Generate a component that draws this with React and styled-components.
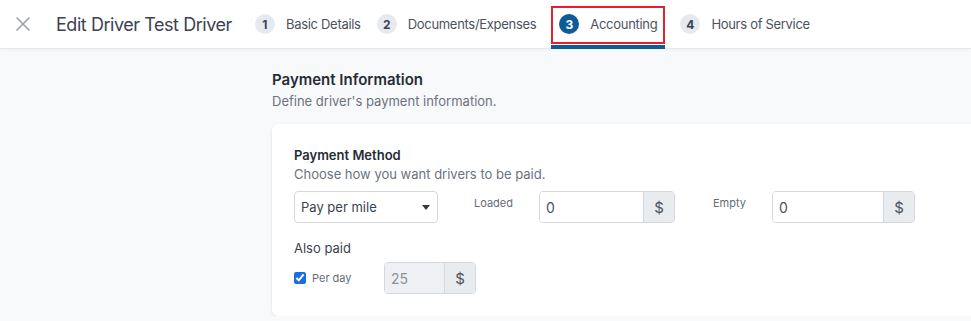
import React from "react";
import styled, { createGlobalStyle } from "styled-components";

const GlobalStyle = createGlobalStyle`
    html, body {
        margin: 0;
        padding: 0;
        background: #f8f9fb;
        font-family: Inter, "Noto Sans", "Liberation Sans", sans-serif;
        overflow: hidden;
    }
    * {
        box-sizing: border-box;
    }
`;

const steps = [
    {num: 1, label: "Basic Details"},
    {num: 2, label: "Documents/Expenses"},
    {num: 3, label: "Accounting", active: true},
    {num: 4, label: "Hours of Service"},
];

const CloseIcon = () => (
    <svg width="14" height="14" viewBox="0 0 14 14">
        <path d="M1 1 L13 13 M13 1 L1 13" stroke="#9aa1ab" strokeWidth="1.6" strokeLinecap="round"/>
    </svg>
);

const Caret = () => (
    <svg width="8" height="5" viewBox="0 0 8 5">
        <path d="M0 0 L8 0 L4 5 Z" fill="#333a44"/>
    </svg>
);

const App = () => {
    return (
        <>
            <GlobalStyle/>
            <Header>
                <CloseButton><CloseIcon/></CloseButton>
                <Title>Edit Driver Test Driver</Title>
                <Steps>
                    {steps.map((s) => (
                        <Step key={s.num} $active={s.active}>
                            <StepNumber $active={s.active}>{s.num}</StepNumber>
                            <StepLabel>{s.label}</StepLabel>
                        </Step>
                    ))}
                </Steps>
            </Header>
            <Main>
                <SectionTitle>Payment Information</SectionTitle>
                <SectionSub>Define driver's payment information.</SectionSub>
                <Card>
                    <CardTitle>Payment Method</CardTitle>
                    <CardSub>Choose how you want drivers to be paid.</CardSub>
                    <FieldRow>
                        <Select>
                            <span>Pay per mile</span>
                            <Caret/>
                        </Select>
                        <FieldLabel $width={65} $ml={36}>Loaded</FieldLabel>
                        <InputGroup>
                            <Input $width={103} defaultValue="0"/>
                            <Addon>$</Addon>
                        </InputGroup>
                        <FieldLabel $width={59} $ml={38}>Empty</FieldLabel>
                        <InputGroup>
                            <Input $width={110} defaultValue="0"/>
                            <Addon>$</Addon>
                        </InputGroup>
                    </FieldRow>
                    <AlsoPaid>Also paid</AlsoPaid>
                    <CheckRow>
                        <CheckLabel>
                            <Checkbox type="checkbox" defaultChecked/>
                            Per day
                        </CheckLabel>
                        <InputGroup>
                            <Input $width={59} defaultValue="25" disabled/>
                            <Addon>$</Addon>
                        </InputGroup>
                    </CheckRow>
                </Card>
            </Main>
        </>
    );
};
export default App;

const Header = styled.header`
    height: 49px;
    background: #ffffff;
    border-bottom: 1px solid #e6e8eb;
    box-shadow: 0 1px 3px rgba(0, 0, 0, 0.04);
    display: flex;
    align-items: center;
    padding-left: 16px;
`;

const CloseButton = styled.div`
    display: flex;
    align-items: center;
    width: 14px;
    height: 14px;
    margin-right: 26px;
`;

const Title = styled.h1`
    margin: 0;
    font-size: 18px;
    font-weight: 400;
    color: #3b4250;
    letter-spacing: -0.025em;
    margin-right: 15px;
    white-space: nowrap;
`;

const Steps = styled.nav`
    display: flex;
    height: 100%;
`;

const Step = styled.div`
    position: relative;
    display: flex;
    align-items: center;
    gap: 11px;
    padding: 0 8px;
    height: 100%;
    margin: ${(p) => (p.$active ? "0 7px 0 7px" : "0")};

    ${(p) =>
        p.$active &&
        `
        &::before {
            content: "";
            position: absolute;
            left: 0;
            right: 0;
            top: 6px;
            height: 34px;
            border: 2px solid #e5202e;
        }
        &::after {
            content: "";
            position: absolute;
            left: 0;
            right: 0;
            bottom: -1px;
            height: 4px;
            background: #0d5c97;
        }
    `}
`;

const StepNumber = styled.span`
    width: 20px;
    height: 20px;
    border-radius: 50%;
    display: flex;
    align-items: center;
    justify-content: center;
    font-size: 12px;
    font-weight: 700;
    background: ${(p) => (p.$active ? "#0d5c97" : "#e6eaf0")};
    color: ${(p) => (p.$active ? "#ffffff" : "#3b4250")};
`;

const StepLabel = styled.span`
    font-size: 13px;
    letter-spacing: -0.3px;
    color: #4b5260;
    white-space: nowrap;
`;

const Main = styled.main`
    padding: 21px 0 0 272px;
`;

const SectionTitle = styled.h2`
    margin: 0;
    font-size: 15px;
    font-weight: 600;
    line-height: 20px;
    color: #262c36;
`;

const SectionSub = styled.p`
    margin: 2px 0 0;
    font-size: 13px;
    line-height: 18px;
    color: #6b7280;
`;

const Card = styled.section`
    margin-top: 14px;
    width: 760px;
    background: #ffffff;
    border-radius: 6px;
    box-shadow: 0 1px 3px rgba(0, 0, 0, 0.12);
    padding: 22px 22px 22px 22px;
`;

const CardTitle = styled.h3`
    margin: 0;
    font-size: 13px;
    font-weight: 600;
    line-height: 18px;
    color: #262c36;
`;

const CardSub = styled.p`
    margin: 1px 0 0;
    font-size: 13px;
    line-height: 18px;
    color: #6b7280;
`;

const FieldRow = styled.div`
    display: flex;
    align-items: flex-start;
    margin-top: 8px;
`;

const Select = styled.div`
    width: 144px;
    height: 32px;
    border: 1px solid #d5d9df;
    border-radius: 4px;
    background: #ffffff;
    display: flex;
    align-items: center;
    justify-content: space-between;
    padding: 0 7px 0 6px;
    font-size: 13px;
    color: #3b4250;
`;

const FieldLabel = styled.label`
    width: ${(p) => p.$width}px;
    margin-left: ${(p) => p.$ml}px;
    font-size: 11px;
    font-weight: 400;
    line-height: 14px;
    padding-top: 5px;
    color: #666c77;
`;

const InputGroup = styled.div`
    display: flex;
    height: 32px;
    border: 1px solid #d5d9df;
    border-radius: 4px;
    overflow: hidden;
`;

const Input = styled.input`
    width: ${(p) => p.$width}px;
    border: none;
    outline: none;
    padding: 0 6px;
    font-family: inherit;
    font-size: 14px;
    color: #4b5260;
    background: #ffffff;

    &:disabled {
        background: #eef0f3;
        color: #8a919c;
    }
`;

const Addon = styled.span`
    width: 31px;
    display: flex;
    align-items: center;
    justify-content: center;
    background: #e9ecef;
    border-left: 1px solid #d5d9df;
    font-size: 15px;
    color: #4b5260;
`;

const AlsoPaid = styled.div`
    margin-top: 16px;
    font-size: 13px;
    line-height: 18px;
    color: #3b4250;
`;

const CheckRow = styled.div`
    display: flex;
    align-items: center;
    margin-top: 5px;
`;

const CheckLabel = styled.label`
    width: 90px;
    display: flex;
    align-items: center;
    gap: 6px;
    font-size: 11px;
    color: #666c77;
`;

const Checkbox = styled.input`
    margin: 0;
    width: 12px;
    height: 12px;
    accent-color: #1a6fe0;
`;
